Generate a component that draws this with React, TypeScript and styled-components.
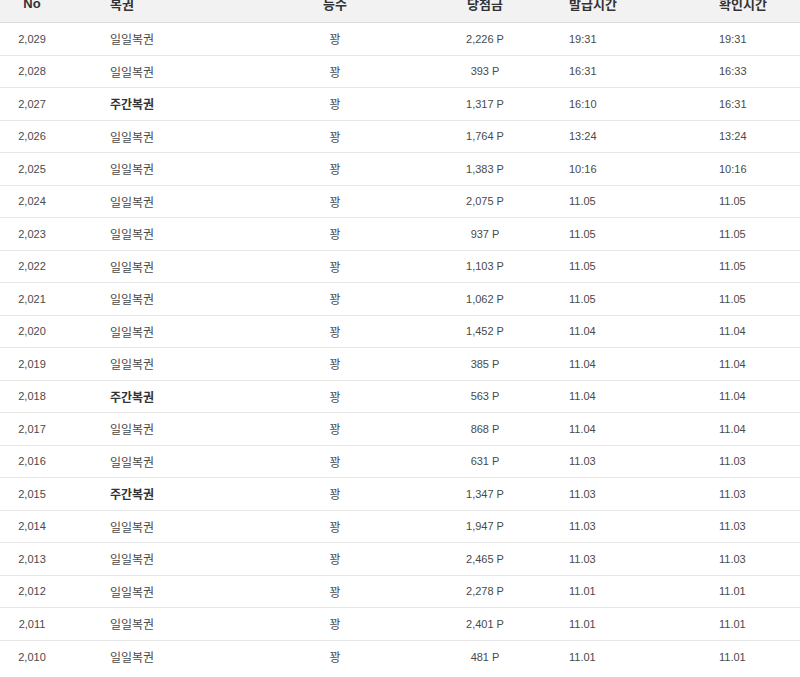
import React from "react";
import styled, { createGlobalStyle } from "styled-components";

const GlobalStyle = createGlobalStyle`
  html, body {
    margin: 0;
    padding: 0;
    background: #ffffff;
    overflow: hidden;
  }
  body {
    font-family: "Liberation Sans", "Noto Sans CJK KR", sans-serif;
    color: #444;
  }
`;

const COLS = "64px 186px 170px 130px 150px 100px";

const Table = styled.div`
  width: 800px;
  margin-top: -15px;
`;

const HeadRow = styled.div`
  display: grid;
  grid-template-columns: ${COLS};
  height: 37px;
  background: #f2f2f2;
  border-bottom: 1px solid #dcdcdc;
  box-sizing: content-box;
`;

const Row = styled.div`
  display: grid;
  grid-template-columns: ${COLS};
  height: 32.5px;
  box-sizing: border-box;
  border-bottom: 1px solid #e6e6e6;
  &:last-child {
    border-bottom: none;
  }
`;

type Align = "center" | "left";

const HeadCell = styled.div<{ $align: Align; $pad?: number }>`
  display: flex;
  align-items: center;
  justify-content: ${(p) => (p.$align === "center" ? "center" : "flex-start")};
  padding-left: ${(p) => p.$pad ?? 0}px;
  font-size: 13px;
  font-weight: bold;
  color: #333;
  white-space: nowrap;
`;

const Cell = styled.div<{ $align: Align; $pad?: number; $bold?: boolean; $kr?: boolean }>`
  display: flex;
  align-items: center;
  justify-content: ${(p) => (p.$align === "center" ? "center" : "flex-start")};
  padding-left: ${(p) => p.$pad ?? 0}px;
  font-size: ${(p) => (p.$kr ? "12px" : "11px")};
  font-weight: ${(p) => (p.$bold ? "bold" : "normal")};
  color: ${(p) => (p.$bold ? "#333" : "#4a4a4a")};
  white-space: nowrap;
`;

type Item = {
  no: string;
  kind: string;
  prize: string;
  issued: string;
  checked: string;
};

const data: Item[] = [
  { no: "2,029", kind: "일일복권", prize: "2,226 P", issued: "19:31", checked: "19:31" },
  { no: "2,028", kind: "일일복권", prize: "393 P", issued: "16:31", checked: "16:33" },
  { no: "2,027", kind: "주간복권", prize: "1,317 P", issued: "16:10", checked: "16:31" },
  { no: "2,026", kind: "일일복권", prize: "1,764 P", issued: "13:24", checked: "13:24" },
  { no: "2,025", kind: "일일복권", prize: "1,383 P", issued: "10:16", checked: "10:16" },
  { no: "2,024", kind: "일일복권", prize: "2,075 P", issued: "11.05", checked: "11.05" },
  { no: "2,023", kind: "일일복권", prize: "937 P", issued: "11.05", checked: "11.05" },
  { no: "2,022", kind: "일일복권", prize: "1,103 P", issued: "11.05", checked: "11.05" },
  { no: "2,021", kind: "일일복권", prize: "1,062 P", issued: "11.05", checked: "11.05" },
  { no: "2,020", kind: "일일복권", prize: "1,452 P", issued: "11.04", checked: "11.04" },
  { no: "2,019", kind: "일일복권", prize: "385 P", issued: "11.04", checked: "11.04" },
  { no: "2,018", kind: "주간복권", prize: "563 P", issued: "11.04", checked: "11.04" },
  { no: "2,017", kind: "일일복권", prize: "868 P", issued: "11.04", checked: "11.04" },
  { no: "2,016", kind: "일일복권", prize: "631 P", issued: "11.03", checked: "11.03" },
  { no: "2,015", kind: "주간복권", prize: "1,347 P", issued: "11.03", checked: "11.03" },
  { no: "2,014", kind: "일일복권", prize: "1,947 P", issued: "11.03", checked: "11.03" },
  { no: "2,013", kind: "일일복권", prize: "2,465 P", issued: "11.03", checked: "11.03" },
  { no: "2,012", kind: "일일복권", prize: "2,278 P", issued: "11.01", checked: "11.01" },
  { no: "2,011", kind: "일일복권", prize: "2,401 P", issued: "11.01", checked: "11.01" },
  { no: "2,010", kind: "일일복권", prize: "481 P", issued: "11.01", checked: "11.01" },
];

export default function App() {
  return (
    <>
      <GlobalStyle />
      <Table>
        <HeadRow>
          <HeadCell $align="center">No</HeadCell>
          <HeadCell $align="left" $pad={46}>복권</HeadCell>
          <HeadCell $align="center">등수</HeadCell>
          <HeadCell $align="center">당첨금</HeadCell>
          <HeadCell $align="left" $pad={19}>발급시간</HeadCell>
          <HeadCell $align="left" $pad={19}>확인시간</HeadCell>
        </HeadRow>
        {data.map((d) => (
          <Row key={d.no}>
            <Cell $align="center">{d.no}</Cell>
            <Cell $align="left" $pad={46} $kr $bold={d.kind === "주간복권"}>
              {d.kind}
            </Cell>
            <Cell $align="center" $kr>꽝</Cell>
            <Cell $align="center">{d.prize}</Cell>
            <Cell $align="left" $pad={19}>{d.issued}</Cell>
            <Cell $align="left" $pad={19}>{d.checked}</Cell>
          </Row>
        ))}
      </Table>
    </>
  );
}
